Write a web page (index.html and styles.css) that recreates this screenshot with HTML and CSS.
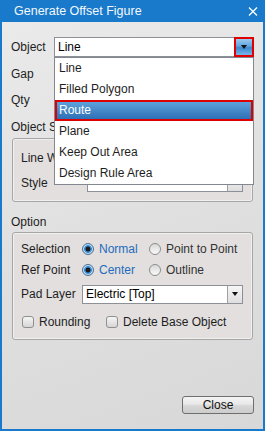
FILE: index.html
```html
<!DOCTYPE html>
<html lang="en">
<head>
  <meta charset="UTF-8">
  <meta name="viewport" content="width=device-width, initial-scale=1.0">
  <title>Generate Offset Figure</title>
  <link rel="stylesheet" href="styles.css">
</head>
<body>
  <div class="dialog">
    <div class="dialog__title">
      <span>Generate Offset Figure</span>
      <svg class="dialog__close" width="10" height="9" viewBox="0 0 10 9">
        <path d="M1 0.5 L9 8.5 M9 0.5 L1 8.5" stroke="#fff" stroke-width="1.3" fill="none"/>
      </svg>
    </div>

    <div class="dialog__body">
      <!-- Object -->
      <div class="row row--object">
        <span class="label label--top">Object</span>
        <div class="combo combo--object">
          <span class="combo__value">Line</span>
          <div class="combo__btn combo__btn--active"><i class="tri"></i></div>
          <!-- раскрытый список -->
          <ul class="drop">
            <li class="drop__item">Line</li>
            <li class="drop__item">Filled Polygon</li>
            <li class="drop__item drop__item--sel">Route</li>
            <li class="drop__item">Plane</li>
            <li class="drop__item">Keep Out Area</li>
            <li class="drop__item">Design Rule Area</li>
          </ul>
        </div>
      </div>
      <div class="row row--gap">
        <span class="label label--top">Gap</span>
        <div class="field"></div>
      </div>
      <div class="row row--qty">
        <span class="label label--top">Qty</span>
        <div class="field"></div>
      </div>

      <!-- Object Style (частично под списком) -->
      <div class="section-title section-title--style">Object Style</div>
      <div class="group group--style">
        <div class="row">
          <span class="label label--style"><span class="clip">Line Width</span></span>
          <div class="field field--style"></div>
        </div>
        <div class="row row--style">
          <span class="label label--style">Style</span>
          <div class="combo combo--style">
            <span class="combo__value"></span>
            <div class="combo__btn"><i class="tri"></i></div>
          </div>
        </div>
      </div>

      <!-- Option -->
      <div class="section-title section-title--option">Option</div>
      <div class="group group--option">
        <div class="row row--radio">
          <span class="label label--opt">Selection</span>
          <div class="opt"><i class="radio radio--on"></i><span class="opt__text opt__text--on">Normal</span></div>
          <div class="opt"><i class="radio"></i><span class="opt__text">Point to Point</span></div>
        </div>
        <div class="row row--radio row--ref">
          <span class="label label--opt">Ref Point</span>
          <div class="opt"><i class="radio radio--on"></i><span class="opt__text opt__text--on">Center</span></div>
          <div class="opt"><i class="radio"></i><span class="opt__text">Outline</span></div>
        </div>
        <div class="row row--pad">
          <span class="label label--opt">Pad Layer</span>
          <div class="combo combo--pad">
            <span class="combo__value">Electric [Top]</span>
            <div class="combo__btn"><i class="tri"></i></div>
          </div>
        </div>
        <div class="row row--check">
          <div class="check check--first"><i class="box"></i><span>Rounding</span></div>
          <div class="check"><i class="box"></i><span>Delete Base Object</span></div>
        </div>
      </div>

      <div class="spacer"></div>
      <div class="footer">
        <button class="btn">Close</button>
      </div>
    </div>
  </div>
</body>
</html>
```

FILE: styles.css
```css
* {
  box-sizing: border-box;
}
body {
  margin: 0;
  font-family: "Liberation Sans", Arial, sans-serif;
  font-size: 12px;
  color: #1e1e1e;
}
.dialog {
  width: 265px;
  height: 431px;
  border: 2px solid #1979ca;
  border-top: 0;
  display: flex;
  flex-direction: column;
  background: linear-gradient(160deg, #ebebeb 0%, #e0e0e0 50%, #d8d8d8 100%);
}
.dialog__title {
  height: 22px;
  background: #1979ca;
  color: #f4f8fc;
  display: flex;
  align-items: center;
  justify-content: space-between;
  padding: 0 5px 0 12px;
  font-size: 12.5px;
}
.dialog__close {
  display: block;
}
.dialog__body {
  flex: 1;
  display: flex;
  flex-direction: column;
  padding: 15px 9px 15px 9px;
}

/* строки */
.row {
  display: flex;
  align-items: center;
  height: 20px;
}
.row--object {
  position: relative;
}
.row--gap {
  margin-top: 7px;
}
.row--qty {
  margin-top: 6px;
}
.label {
  flex: none;
}
.label--top {
  width: 43px;
}
.label--style {
  width: 66px;
}
.label--opt {
  width: 61px;
}
/* текст уходит под список - обрезаем */
.clip {
  display: block;
  width: 33px;
  overflow: hidden;
  white-space: nowrap;
}
.field {
  flex: 1;
  height: 20px;
  background: #fff;
  border: 1px solid #abadb3;
}

/* combo */
.combo {
  flex: 1;
  display: flex;
  align-items: stretch;
  background: #fff;
  border: 1px solid #8e9097;
  position: relative;
}
.combo__value {
  flex: 1;
  padding-left: 3px;
  display: flex;
  align-items: center;
  color: #000;
}
.combo--object {
  height: 20px;
}
.combo__btn {
  width: 15px;
  flex: none;
  display: flex;
  align-items: center;
  justify-content: center;
  border-left: 1px solid #a0a0a0;
  background: linear-gradient(#f6f6f6, #dedede);
}
.combo__btn--active {
  width: 20px;
  margin: -1px -1px -1px 0;
  border: 2px solid #e00000;
  background: linear-gradient(#9acaf0 0%, #5fa4e0 45%, #3b88cf 55%, #7ab7e8 100%);
}
.tri {
  width: 0;
  height: 0;
  border-left: 3.5px solid transparent;
  border-right: 3.5px solid transparent;
  border-top: 4px solid #111;
}

/* раскрытый список */
.drop {
  position: absolute;
  top: 19px;
  left: -1px;
  width: 200px;
  margin: 0;
  padding: 0;
  list-style: none;
  background: #fff;
  border: 1px solid #828790;
  z-index: 5;
}
.drop__item {
  height: 21px;
  line-height: 21px;
  padding-left: 4px;
  color: #1e1e1e;
}
.drop__item--sel {
  border: 2px solid #dc0000;
  padding-left: 2px;
  line-height: 17px;
  color: #fff;
  background: linear-gradient(#5da2dc, #2d70b6);
}

/* группы */
.section-title {
  height: 14px;
  line-height: 14px;
}
.section-title--style {
  margin-top: 10px;
  width: 43px;
  overflow: hidden;
  white-space: nowrap;
}
.section-title--option {
  margin-top: 13px;
}
.group {
  margin: 4px 1px 0;
  border: 1px solid #a6a6a6;
  border-radius: 3px;
  background: #e2dfde;
  box-shadow: inset 0 0 0 1px #f2f0ef;
  padding: 9px 9px 9px 8px;
}
.group--option {
  margin-top: 3px;
  padding-top: 8px;
}
.row--style {
  margin-top: 6px;
  height: 18px;
}
.combo--style {
  height: 18px;
}

/* радио */
.row--radio {
  height: 16px;
}
.row--ref {
  margin-top: 5px;
}
.opt {
  width: 67px;
  display: flex;
  align-items: center;
}
.radio {
  width: 12px;
  height: 12px;
  border-radius: 50%;
  border: 1px solid #8d8d8d;
  background: linear-gradient(#d8d8d8, #fafafa);
  margin-right: 5px;
  flex: none;
}
.radio--on {
  border-color: #4d6f92;
  background: radial-gradient(circle, #1c1c1c 0 2.2px, #3f8fd8 2.8px 3.6px, #b9dcf6 4.2px);
}
.opt__text {
  white-space: nowrap;
  color: #333;
}
.opt__text--on {
  color: #1f6cbd;
}

.row--pad {
  margin-top: 6px;
}
.combo--pad {
  height: 19px;
}

/* чекбоксы */
.row--check {
  margin-top: 10px;
  height: 16px;
}
.check {
  display: flex;
  align-items: center;
}
.check--first {
  width: 84px;
  margin-left: 1px;
}
.box {
  width: 12px;
  height: 12px;
  border: 1px solid #8f8f8f;
  border-radius: 3px;
  background: linear-gradient(#f6f6f6, #d5d5d5);
  margin-right: 5px;
  flex: none;
}

.spacer {
  flex: 1;
}
.footer {
  display: flex;
  justify-content: flex-end;
}
.btn {
  width: 72px;
  height: 18px;
  padding: 0;
  border: 1px solid #6f6f6f;
  border-radius: 3px;
  background: linear-gradient(#f4f4f4 0%, #e8e8e8 45%, #d6d6d6 55%, #cdcdcd 100%);
  font-family: "Liberation Sans", Arial, sans-serif;
  font-size: 12px;
  color: #111;
}
```
